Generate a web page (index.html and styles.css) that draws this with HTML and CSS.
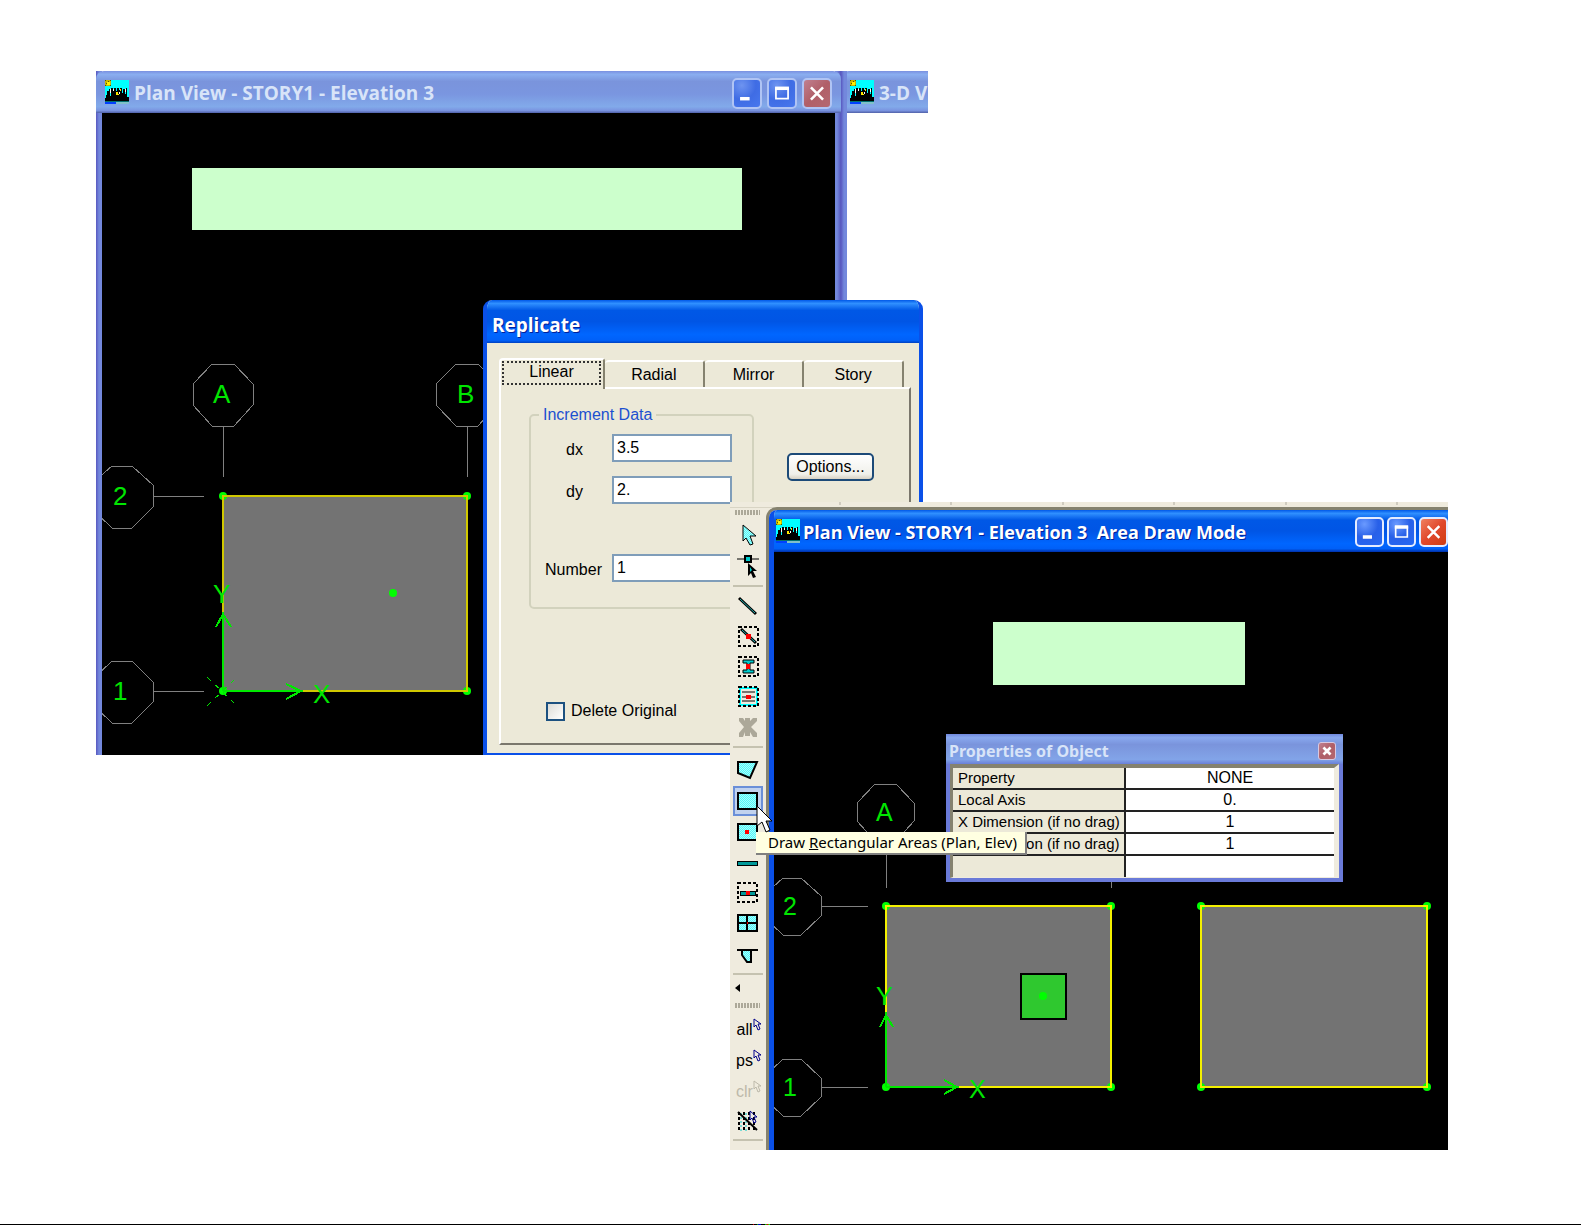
FILE: index.html
```html
<!DOCTYPE html>
<html lang="en">
<head>
<meta charset="utf-8">
<title>Replicate and draw areas</title>
<link rel="stylesheet" href="styles.css">
</head>
<body>
<svg class="defs" aria-hidden="true">
  <defs>
    <symbol id="app" viewBox="0 0 24 24">
      <rect width="24" height="24" fill="#00ffff"/>
      <path d="M0 0h6v6h-6z" fill="#c8b400"/><path d="M2 2h3v3h-3z" fill="#fff200"/><path d="M0 0h1v1H0zM5 0h1v1H5zM0 5h1v1H0zM5 5h1v1H5zM3 1h1v1H3zM1 3h1v1H1z" fill="#555500"/>
      <path d="M0 21V18H1V15H2V11H4V9H5V16H6V8H8V11H9V8H11V11H12V8H14V10H15V8H17V13H18V9H20V14H21V8H22V17H24V21Z" fill="#000"/>
      <path d="M5 9h1v4H5zM8 9h1v2H8zM14 12h1v2h-1zM20 9h1v3h-1z" fill="#fff"/>
      <path d="M11 12h2v3h-2zM15 9h1v2h-1zM12 14h2v1h-2z" fill="#ffe800"/>
      <path d="M0 21h24v1H0z" fill="#007070"/><path d="M0 22h11v2H0z" fill="#0040ff"/><path d="M11 22h13v2H11z" fill="#80c0c8"/>
    </symbol>
    <symbol id="min" viewBox="0 0 30 30"><path d="M7 19h11v4H7z" fill="#fff"/></symbol>
    <symbol id="max" viewBox="0 0 30 30"><path d="M8 9h14v12H8z" fill="none" stroke="#fff" stroke-width="2"/><path d="M7 7h16v4H7z" fill="#fff"/></symbol>
    <symbol id="close" viewBox="0 0 30 30"><path d="M8 8L22 22M22 8L8 22" stroke="#fff" stroke-width="3"/></symbol>
    <symbol id="pick" viewBox="0 0 9 13"><path d="M1 1V9L3 7L5 12L7 11L5 6H8Z" fill="none" stroke="currentColor"/></symbol>
    <pattern id="dots" width="2" height="2" patternUnits="userSpaceOnUse"><rect width="2" height="2" fill="#55f5f5"/><path d="M0 0h1v1H0zM1 1h1v1H1z" fill="#a5ffff"/></pattern>
  </defs>
</svg>

<main class="slide">
  <section class="shot shot-replicate">
    <article class="window inactive plan">
      <header class="titlebar">
        <svg class="app-icon"><use href="#app"/></svg>
        <h2>Plan View - STORY1 - Elevation 3</h2>
        <button class="tb" aria-label="Minimize"><svg><use href="#min"/></svg></button>
        <button class="tb" aria-label="Maximize"><svg><use href="#max"/></svg></button>
        <button class="tb tb-close" aria-label="Close"><svg><use href="#close"/></svg></button>
      </header>
      <svg class="canvas" viewBox="102 113 733 642" preserveAspectRatio="xMinYMin slice">
        <rect x="192" y="168" width="550" height="62" fill="#ccffcc"/>
        <g class="grid">
          <path d="M212 364H234L253 384V405L234 426H212L193 405V384ZM223 426V477"/>
          <path d="M456 364H478L497 384V405L478 426H456L436 405V384ZM467 426V477"/>
          <path d="M112 466H132L153 485V507L132 528H112L90 507V485ZM153 496H204"/>
          <path d="M112 661H132L153 682V702L132 723H112L90 702V682ZM153 691H204"/>
        </g>
        <rect class="slab muted" x="223" y="496" width="244" height="195"/>
        <g class="node"><circle cx="223" cy="496" r="4"/><circle cx="467" cy="496" r="4"/><circle cx="467" cy="691" r="4"/><circle cx="223" cy="691" r="4"/><circle cx="393" cy="593" r="4"/></g>
        <path class="slab-line muted" d="M223 612V496H467V691H303"/>
        <path class="axis" d="M223 691V612M216 627L223 614L231 627M223 691H303M286 684L301 691L286 699"/>
        <path class="axis spark" d="M207 677L237 706M207 706L237 677"/>
        <g class="label"><text x="213" y="403">A</text><text x="457" y="403">B</text><text x="113" y="505">2</text><text x="113" y="700">1</text><text x="213" y="603">Y</text><text x="313" y="703">X</text></g>
      </svg>
    </article>
    <article class="window inactive view3d">
      <header class="titlebar">
        <svg class="app-icon"><use href="#app"/></svg>
        <h2>3-D View</h2>
      </header>
    </article>

    <form class="dialog">
      <header class="dialog-title"><h2>Replicate</h2></header>
      <div class="dialog-body">
        <nav class="tabs">
          <button type="button" class="tab current"><span>Linear</span></button>
          <button type="button" class="tab">Radial</button>
          <button type="button" class="tab">Mirror</button>
          <button type="button" class="tab">Story</button>
        </nav>
        <div class="page">
          <div class="page-row">
            <fieldset>
              <legend>Increment Data</legend>
              <div class="field"><label for="dx">dx</label><input id="dx" value="3.5"></div>
              <div class="field"><label for="dy">dy</label><input id="dy" value="2."></div>
              <div class="field number"><label for="num">Number</label><input id="num" value="1"></div>
            </fieldset>
            <button type="button" class="options">Options...</button>
          </div>
          <div class="check"><input type="checkbox" id="del"><label for="del">Delete Original</label></div>
        </div>
      </div>
    </form>
  </section>

  <section class="shot shot-draw">
    <div class="ruler"><i></i><i></i><i></i><i></i><i></i><i></i></div>
    <div class="workspace">
      <div class="toolbar">
        <div class="grip"></div>
        <div class="tools">
          <button aria-label="Pointer"><svg viewBox="0 0 30 30"><path d="M10 4V20L13 17L17 24L20 23L17 15H23Z" fill="url(#dots)" stroke="#000"/></svg></button>
          <button aria-label="Reshape"><svg viewBox="0 0 30 30"><path d="M4 8H26" stroke="#000" stroke-width="1"/><rect x="12" y="5" width="6" height="6" fill="#0cc" stroke="#000" stroke-width="2"/><path d="M15 12V25L18 22L20 27L23 26L20 20H24Z"/><path d="M17 16V21L19 19Z" fill="#0cc"/></svg></button>
        </div>
        <hr>
        <div class="tools">
          <button aria-label="Draw lines"><svg viewBox="0 0 30 30"><path d="M6 6L23 22" stroke="#000" stroke-width="3"/><path d="M7 7L22 21" stroke="#2aa"/></svg></button>
          <button aria-label="Create lines in region"><svg viewBox="0 0 30 30"><rect class="dash" x="6" y="5" width="19" height="19"/><path d="M8 7L23 21" stroke="#000" stroke-width="3"/><path d="M9 8L22 20" stroke="#2aa"/><path class="red" d="M13 12h5v5h-5z"/></svg></button>
          <button aria-label="Create columns"><svg viewBox="0 0 30 30"><rect class="dash" x="6" y="5" width="19" height="19"/><path d="M10 8H21V11H17V18H21V21H10V18H14V11H10Z" fill="#0cc" stroke="#000"/><path class="red" d="M13 12h4v5h-4z"/></svg></button>
          <button aria-label="Create secondary beams"><svg viewBox="0 0 30 30"><rect x="7" y="6" width="17" height="17" fill="none" stroke="#0ff" stroke-width="2"/><rect class="dash" x="6" y="5" width="19" height="19"/><path d="M9 10H22M9 15H22M9 19H22" stroke="#000"/><path class="red" d="M13 13h5v4h-5z"/></svg></button>
          <button aria-label="Create braces"><svg viewBox="0 0 30 30"><path d="M6 6H10L12 9V6H17V9L20 6H24V9L18 15L24 21V25H20L17 20V24H12V20L10 25H6V21L11 15L6 9Z" fill="#aca899"/></svg></button>
        </div>
        <hr>
        <div class="tools spaced">
          <button aria-label="Draw areas"><svg viewBox="0 0 30 30"><path class="area" d="M5 7H24L17 23L5 18Z"/></svg></button>
          <button class="on" aria-label="Draw rectangular areas"><svg viewBox="0 0 30 30"><path class="area" d="M5 7H24V23H5Z"/></svg></button>
          <button aria-label="Create areas at click"><svg viewBox="0 0 30 30"><path class="area" d="M5 7H24V23H5Z"/><path class="red" d="M12 13h4v4h-4z"/></svg></button>
          <button aria-label="Draw walls"><svg viewBox="0 0 30 30"><path d="M4 13H25V18H4Z"/><path d="M5 14H24V17H5Z" fill="#099"/></svg></button>
          <button aria-label="Create walls in region"><svg viewBox="0 0 30 30"><rect class="dash" x="5" y="4" width="19" height="19"/><path d="M7 12H23V17H7Z"/><path d="M8 13H22V16H8Z" fill="#099"/><path class="red" d="M13 12h4v4h-4z"/></svg></button>
          <button aria-label="Mesh areas"><svg viewBox="0 0 30 30"><path class="area" d="M5 5H24V21H5ZM14 5V21M5 13H24"/><path class="red" d="M14 12h1v2h-1z"/></svg></button>
          <button aria-label="Draw openings"><svg viewBox="0 0 30 30"><path class="area" d="M9 10V14L14 21H18V10"/><path d="M4 9H25" stroke="#000" stroke-width="2"/></svg></button>
        </div>
        <hr>
        <div class="more"><svg viewBox="0 0 5 10"><path d="M5 1V9L0 5Z"/></svg></div>
        <div class="grip"></div>
        <div class="tools spaced">
          <button class="pick" aria-label="Select all"><span>all</span><svg><use href="#pick"/></svg></button>
          <button class="pick" aria-label="Previous selection"><span>ps</span><svg><use href="#pick"/></svg></button>
          <button class="pick" aria-label="Clear selection" disabled><span>clr</span><svg><use href="#pick"/></svg></button>
          <button aria-label="Select by crossing line"><svg viewBox="0 0 30 30"><path d="M6 5V24M11 5V24M16 5V24M21 5V24" stroke="#000" stroke-width="2" stroke-dasharray="3 2"/><path d="M8 6V24M13 6V24" stroke="#0cc" stroke-dasharray="2 2"/><path d="M5 5L24 23" stroke="#000" stroke-width="2"/><path d="M17 4V13L19 11L21 16L23 15L21 10H24Z" fill="none" stroke="#00008b" stroke-width="1"/></svg></button>
        </div>
        <hr>
      </div>
      <article class="window active">
        <header class="titlebar">
          <svg class="app-icon"><use href="#app"/></svg>
          <h2>Plan View - STORY1 - Elevation 3&nbsp; Area Draw Mode</h2>
          <button class="tb" aria-label="Minimize"><svg><use href="#min"/></svg></button>
          <button class="tb" aria-label="Maximize"><svg><use href="#max"/></svg></button>
          <button class="tb tb-close" aria-label="Close"><svg><use href="#close"/></svg></button>
        </header>
        <svg class="canvas" viewBox="774 552 674 598" preserveAspectRatio="xMinYMin slice">
          <rect x="993" y="622" width="252" height="63" fill="#ccffcc"/>
          <g class="grid">
            <path d="M875 784H896L914 803V821L896 841H875L857 821V803ZM886 841V888M1111 841V888"/>
            <path d="M783 878H801L821 896V916L801 935H783L763 916V896ZM821 906H868"/>
            <path d="M783 1059H801L821 1078V1097L801 1116H783L763 1097V1078ZM821 1087H868"/>
          </g>
          <rect class="slab" x="886" y="906" width="225" height="181"/>
          <rect class="slab" x="1201" y="906" width="226" height="181"/>
          <g class="node"><circle cx="886" cy="906" r="4"/><circle cx="1111" cy="906" r="4"/><circle cx="1111" cy="1087" r="4"/><circle cx="886" cy="1087" r="4"/><circle cx="1201" cy="906" r="4"/><circle cx="1427" cy="906" r="4"/><circle cx="1427" cy="1087" r="4"/><circle cx="1201" cy="1087" r="4"/></g>
          <path class="slab-line" d="M886 1012V906H1111V1087H959M1201 906H1427V1087H1201Z"/>
          <rect x="1021" y="974" width="45" height="45" fill="#2fc82f" stroke="#000" stroke-width="2"/>
          <circle class="node" cx="1043" cy="996" r="4"/>
          <path class="axis" d="M886 1087V1012M880 1027L886 1015L893 1027M886 1087H959M944 1080L957 1087L944 1094"/>
          <g class="label small"><text x="876" y="821">A</text><text x="783" y="915">2</text><text x="783" y="1096">1</text><text x="876" y="1005">Y</text><text x="969" y="1098">X</text></g>
        </svg>
      </article>
    </div>

    <article class="props">
      <header><h3>Properties of Object</h3><button class="tb-close" aria-label="Close"><svg viewBox="0 0 18 18"><path d="M5 5L13 13M13 5L5 13" stroke="#fff" stroke-width="3"/></svg></button></header>
      <table>
        <tr><th>Property</th><td>NONE</td></tr>
        <tr><th>Local Axis</th><td>0.</td></tr>
        <tr><th>X Dimension (if no drag)</th><td>1</td></tr>
        <tr><th>Y Dimension (if no drag)</th><td>1</td></tr>
        <tr><th></th><td></td></tr>
      </table>
    </article>
    <div class="tooltip" role="tooltip">Draw <u>R</u>ectangular Areas (Plan, Elev)</div>
    <svg class="cursor" viewBox="0 0 18 28"><path d="M1 1V21L6 17L10 27L14 25L10 16H16Z" fill="#fff" stroke="#000"/></svg>
  </section>
</main>
</body>
</html>
```
FILE: styles.css
```css
* { box-sizing: border-box; }

body {
  margin: 0;
  background: #fff;
  font: 16px/20px "Liberation Sans", Arial, sans-serif;
  color: #000;
}

h2, h3 { margin: 0; }
button, input { font: inherit; color: inherit; padding: 0; margin: 0; }
.defs { position: absolute; width: 0; height: 0; }

.slide {
  position: relative;
  min-height: 100vh;
  border-bottom: 1px solid #000;
}
.slide::after {
  content: "";
  position: absolute;
  left: 753px;
  bottom: -1px;
  width: 17px;
  height: 1px;
  background: linear-gradient(90deg, #c00 1px, #000 1px 4px, #0a0 4px 5px, #00c 5px 8px, #000 8px 12px, #0c0 12px 13px, #c00 14px 15px, #0f0 16px);
}

/* The two overlapping screen captures */
.shot { position: absolute; overflow: hidden; }
.shot-replicate { left: 96px; top: 71px; width: 832px; height: 684px; display: flex; }
.shot-draw { left: 730px; top: 502px; width: 718px; height: 648px; display: flex; flex-direction: column; background: #efebde; }

/* Child windows */
.window { display: flex; flex-direction: column; }
.window.plan { flex: none; width: 745px; }
.window.view3d { flex: 1; min-width: 0; overflow: hidden; }
.inactive {
  border: 0 solid #7388dc;
  border-width: 0 6px;
  border-image: linear-gradient(90deg, #5858c0, #7388dc 3px, #7388dc calc(100% - 4px), #5454bc) 0 6;
}
.window.view3d { border-right-width: 0; }
.active { flex: 1; min-width: 0; border-left: 5px solid #0a50e8; border-radius: 8px 0 0 0; overflow: hidden; }

.titlebar {
  display: flex;
  align-items: center;
  gap: 5px;
  height: 42px;
  flex: none;
  margin: 0 -6px;
  padding: 2px 9px 0 9px;
  color: #d8e4f8;
  background: linear-gradient(#7a90e0, #8aaef0 8%, #7a94dc 25%, #7a96e0 55%, #82aaea 85%, #7a94e0 94%, #5060a8);
}
.plan .titlebar { border-radius: 8px 8px 0 0; }
.view3d .titlebar { border-radius: 8px 0 0 0; }
.active .titlebar {
  margin: 0 0 0 -5px;
  padding: 2px 0 0 7px;
  gap: 3px;
  color: #fff;
  border-radius: 8px 0 0 0;
  background: linear-gradient(#0058e8, #3090ff 8%, #0058e6 24%, #0055e5 50%, #0066ff 80%, #0060f8 92%, #0030a8);
}
.titlebar h2, .dialog-title h2 {
  flex: 1;
  font: bold 19px/24px "Open Sans", "Noto Sans", sans-serif;
  white-space: nowrap;
}
.active.window h2 { font-size: 18px; }
.active h2, .dialog-title h2 { text-shadow: 1px 1px #00209a; }
.app-icon { width: 24px; height: 24px; flex: none; margin-top: -2px; }
.tb {
  width: 30px;
  height: 31px;
  flex: none;
  border: 2px solid #b0c4f4;
  border-radius: 5px;
  background: radial-gradient(circle at 30% 20%, #6e94f0, #3f6ce4 50%, #4878ee);
}
.tb svg { display: block; width: 100%; height: 100%; }
.tb-close { background: linear-gradient(135deg, #c08090, #b05f68 50%, #b46870); }
.active .tb { width: 29px; height: 30px; border-color: #e4ecff; background: radial-gradient(circle at 30% 20%, #6a9aff, #2860e8 50%, #2468f4); }
.active .tb-close { background: linear-gradient(135deg, #f08060, #e0482c 50%, #d03c10); }

/* Model canvas */
.canvas { display: block; flex: 1; width: 100%; min-height: 0; background: #000; shape-rendering: crispEdges; }
.grid { fill: none; stroke: #808080; }
.slab { fill: #737373; }
.slab-line { fill: none; stroke: #f4f000; stroke-width: 2; }
.slab-line.muted { stroke: #d0c800; }
.node { fill: #00ff00; shape-rendering: geometricPrecision; }
.axis { fill: none; stroke: #00e800; stroke-width: 2; }
.spark { stroke-width: 1; stroke-dasharray: 5 6; }
.label { fill: #00e600; font: 26px "Liberation Sans", Arial, sans-serif; }
.label.small { font-size: 25px; }

/* Replicate dialog */
.dialog {
  position: absolute;
  left: 387px;
  top: 229px;
  width: 440px;
  height: 455px;
  display: flex;
  flex-direction: column;
  border: 4px solid #0a50e8;
  border-width: 0 4px 2px;
  border-radius: 9px 9px 0 0;
  overflow: hidden;
  background: #ece9d8;
}
.dialog-title {
  display: flex;
  align-items: center;
  height: 43px;
  flex: none;
  margin: 0 -4px;
  padding: 6px 9px 0;
  color: #fff;
  background: linear-gradient(#0058e8, #3090ff 8%, #0058e6 24%, #0055e5 50%, #0066ff 80%, #0060f8 94%, #0040c0);
}
.dialog-body { display: flex; flex-direction: column; flex: 1; padding: 15px 8px 8px 12px; }
.tabs { display: flex; align-items: flex-end; height: 29px; flex: none; padding-right: 7px; }
.tab {
  flex: 1;
  height: 27px;
  border: solid;
  border-width: 2px 2px 0 0;
  border-color: #fff #85826f #fff #fff;
  border-radius: 4px 3px 0 0;
  background: #ece9d8;
}
.tab.current { flex: none; width: 106px; height: 31px; margin-bottom: -2px; padding: 1px 2px 4px 1px; border-left-width: 2px; z-index: 1; }
.tab.current span { display: block; height: 24px; line-height: 18px; border: 2px dotted #333; }
.page {
  flex: 1;
  padding: 16px 34px 20px 28px;
  border: 2px solid;
  border-color: #fff #7a776c #7a776c #fff;
}
.page-row { display: flex; align-items: flex-start; gap: 33px; }
fieldset {
  width: 225px;
  height: 204px;
  margin: 0;
  padding: 9px 20px 0 16px;
  border: 2px solid #d2d2bd;
  border-radius: 5px;
  flex: none;
}
legend { padding: 0 4px; margin-left: -8px; color: #1c50d0; }
.field { display: flex; align-items: center; margin-bottom: 14px; }
.field label { flex: 1; text-align: center; padding: 4px 10px 0 0; }
.field input { width: 120px; height: 28px; padding: 0 4px 0 3px; border: 2px solid #7f9db9; background: #fff; flex: none; }
.field.number { margin-top: 50px; }
.field.number label { padding-right: 6px; margin-left: -6px; }
.options {
  width: 87px;
  height: 28px;
  margin-top: 48px;
  border: 2px solid #1c4a78;
  border-radius: 5px;
  background: linear-gradient(#fff, #f0f0ea 80%, #d8d2c4);
}
.check { display: flex; align-items: center; gap: 6px; margin: 92px 0 0 17px; }
.check input { appearance: none; width: 19px; height: 19px; border: 2px solid #1c5180; background: linear-gradient(135deg, #dcdcd7, #fff); }

/* Drawing capture */
.ruler { display: flex; justify-content: space-between; height: 6px; flex: none; padding: 0 50px 0 109px; border-bottom: 1px solid #d8d4c4; }
.ruler i { width: 2px; height: 3px; background: #d0ccc0; }
.workspace { display: flex; flex: 1; min-height: 0; }
.workspace .window { margin: 2px 0 0 3px; box-shadow: 0 0 0 3px #85826f; }
.toolbar { width: 36px; flex: none; display: flex; flex-direction: column; background: #efebde; }
.grip { height: 5px; margin: 2px 6px 6px 5px; flex: none; background: repeating-linear-gradient(90deg, #aca899 0 2px, transparent 2px 3px); }
.toolbar hr { width: 30px; height: 2px; margin: 4px auto 5px; border: 0; flex: none; background: #c5c2b0; }
.tools { display: flex; flex-direction: column; align-items: center; }
.tools.spaced { gap: 1px; margin-bottom: -2px; }
.tools button { width: 30px; height: 30px; border: 0; background: none; position: relative; flex: none; }
.tools button > svg { display: block; width: 30px; height: 30px; }
.tools + hr + .tools.spaced { margin-top: 2px; }
.tools .on { outline: 2px solid #6a8fd8; outline-offset: -2px; background: #c1d2ee; }
.tools .pick { display: flex; align-items: flex-start; justify-content: center; color: #00008b; }
.tools .pick span { padding-top: 6px; color: #000; font-size: 16px; }
.tools .pick > svg { width: 9px; height: 13px; margin: 4px -2px 0 0; }
.tools .pick:disabled, .tools .pick:disabled span { color: #bdb9aa; }
.more { height: 21px; padding: 3px 5px; flex: none; }
.more svg { display: block; width: 5px; height: 10px; }
.dash { fill: none; stroke: #000; stroke-width: 2; stroke-dasharray: 3 2; shape-rendering: crispEdges; }
.area { fill: url(#dots); stroke: #000; stroke-width: 2; }
.red { fill: #f00; }

/* Floating property sheet */
.props {
  position: absolute;
  left: 216px;
  top: 232px;
  width: 397px;
  padding: 0 4px 4px;
  background: #6a7ad8;
}
.props header {
  display: flex;
  align-items: center;
  justify-content: space-between;
  height: 30px;
  margin: 0 -4px;
  padding: 3px 7px 0 3px;
  color: #d8e4f8;
  background: linear-gradient(#7088dc, #88a8ee 12%, #7a94dc 35%, #82a4e8 85%, #6a80d8);
}
.props h3 { font: bold 16px/20px "Noto Sans", "Open Sans", sans-serif; }
.props header button { width: 18px; height: 18px; border: 1px solid #d8c8e0; border-radius: 3px; }
.props header svg { display: block; width: 16px; height: 16px; }
.props table {
  width: 100%;
  table-layout: fixed;
  border: solid;
  border-width: 4px 5px 1px 3px;
  border-color: #85826f #efebde #efebde #85826f;
  border-spacing: 0;
  background: #fff;
}
.props th, .props td { height: 22px; padding: 0; line-height: 20px; border-bottom: 2px solid #222; font-weight: normal; }
.props th { width: 173px; padding-left: 5px; font-size: 15px; text-align: left; white-space: nowrap; background: #ece9d8; border-right: 2px solid #222; }
.props td { text-align: center; }
.props tr:last-child > * { height: 21px; border-bottom: 0; }
.tooltip {
  position: absolute;
  left: 26px;
  top: 330px;
  padding: 0 8px 0 12px;
  border: solid #808080;
  border-width: 0 2px 2px 0;
  background: #ffffe1;
  font: 15px/21px "Noto Sans", "Open Sans", sans-serif;
  white-space: nowrap;
}
.cursor { position: absolute; left: 26px; top: 303px; width: 18px; height: 28px; }
```
